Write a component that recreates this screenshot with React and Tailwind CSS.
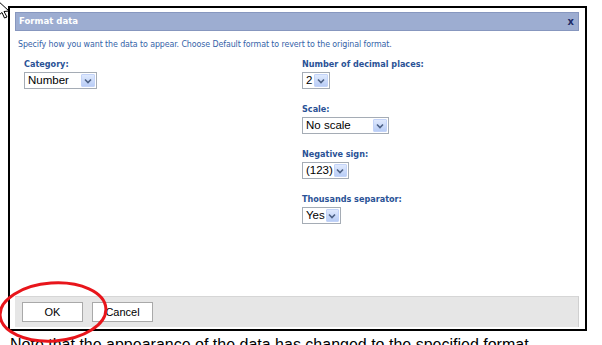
import React from "react";

function Chevron() {
  return (
    <svg width="8" height="6" viewBox="0 0 8 6">
      <path d="M1 1.5 L4 4.5 L7 1.5" fill="none" stroke="#4d6185" strokeWidth="1.6" />
    </svg>
  );
}

function Select({ value, w }) {
  return (
    <div className={`flex items-stretch h-[17px] border border-[#a5acb5] bg-white ${w}`}>
      <div className="flex-1 flex items-center pl-[3px] text-[11.5px] leading-none text-black font-['Liberation_Sans',sans-serif]">
        {value}
      </div>
      <div className="w-[14px] m-[1px] flex items-center justify-center rounded-[1px] bg-gradient-to-b from-[#dfe9fd] to-[#b9cdf6] border border-[#c3d3f8]">
        <Chevron />
      </div>
    </div>
  );
}

function Field({ label, value, w, className = "" }) {
  return (
    <div className={`flex flex-col gap-[2px] ${className}`}>
      <div className="text-[9px] font-bold leading-[11px] text-[#2a5296] font-['DejaVu_Sans_Condensed','DejaVu_Sans',sans-serif]">
        {label}
      </div>
      <Select value={value} w={w} />
    </div>
  );
}

export default function App() {
  return (
    <div className="relative w-[602px] h-[345px] overflow-hidden bg-white font-['Liberation_Sans',sans-serif]">
      <div className="ml-[8px] mt-[6px] w-[579px] h-[325px] border-2 border-black pl-[5px] pr-[6px] pt-[4px] pb-[2px] flex flex-col">
        <div className="flex-1 flex flex-col">
          {/* title bar */}
          <div className="h-[19px] flex items-center justify-between bg-[#9dadd1] border border-[#8797bf] pl-[3px] pr-[4px]">
            <span className="text-white font-bold text-[9.5px] font-['DejaVu_Sans_Condensed','DejaVu_Sans',sans-serif]">Format data</span>
            <span className="text-[#1c2a66] font-bold text-[10px] font-['DejaVu_Sans',sans-serif]">x</span>
          </div>
          {/* body */}
          <div className="flex-1 flex flex-col px-[3px] pt-[8px]">
            <div className="text-[8.8px] leading-[10px] text-[#3563a8] font-['DejaVu_Sans_Condensed','DejaVu_Sans',sans-serif] tracking-[-0.1px]">
              Specify how you want the data to appear. Choose Default format to revert to the original format.
            </div>
            <div className="flex mt-[10px]">
              <div className="w-[284px] pl-[6px]">
                <Field label="Category:" value="Number" w="w-[73px]" />
              </div>
              <div className="flex flex-col gap-[15px]">
                <Field label="Number of decimal places:" value="2" w="w-[28px]" />
                <Field label="Scale:" value="No scale" w="w-[87px]" />
                <Field label="Negative sign:" value="(123)" w="w-[47px]" />
                <Field label="Thousands separator:" value="Yes" w="w-[39px]" />
              </div>
            </div>
          </div>
          {/* footer */}
          <div className="h-[31px] bg-[#e6e6e6] border-t border-[#d6d6d6] border-r border-r-[#d0d0d0] flex items-center gap-[9px] pl-[7px]">
            <button className="w-[61px] h-[20px] bg-white border border-[#a9a9a9] text-[11px] text-black font-['Liberation_Sans',sans-serif]">OK</button>
            <button className="w-[61px] h-[20px] bg-white border border-[#a9a9a9] text-[11px] text-black font-['Liberation_Sans',sans-serif]">Cancel</button>
          </div>
        </div>
      </div>
      <div className="mt-[5px] pl-[10px] text-[16px] leading-[18px] text-black font-['Liberation_Sans',sans-serif] whitespace-nowrap">
        Note that the appearance of the data has changed to the specified format.
      </div>

      {/* red ellipse */}
      <svg className="absolute left-0 top-0 pointer-events-none" width="602" height="345">
        <ellipse cx="53" cy="312" rx="53" ry="29" fill="none" stroke="#e8151b" strokeWidth="3" transform="rotate(-4 53 312)" />
      </svg>
      {/* cursor */}
      <svg className="absolute left-0 top-0 pointer-events-none" width="12" height="22" viewBox="0 0 12 22">
        <path d="M-3 0 L9 11 L4 11.5 L7 17 L4.5 18 L2 12.5 L-1 15" fill="white" stroke="black" strokeWidth="1" />
      </svg>
    </div>
  );
}
